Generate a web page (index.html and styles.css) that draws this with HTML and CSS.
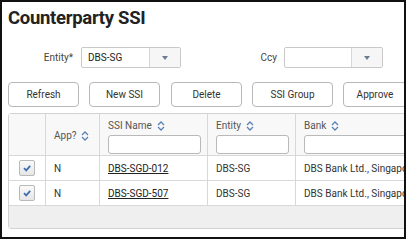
FILE: index.html
```html
<!DOCTYPE html>
<html>
<head>
<meta charset="utf-8">
<link rel="stylesheet" href="styles.css">
</head>
<body>
<div class="frame">
  <h1 class="title">Counterparty SSI</h1>
  <div class="filters">
    <label class="lbl lbl-entity">Entity*</label>
    <div class="select sel-entity"><span class="val">DBS-SG</span><span class="drop"><i class="tri"></i></span></div>
    <label class="lbl lbl-ccy">Ccy</label>
    <div class="select sel-ccy"><span class="val"></span><span class="drop"><i class="tri"></i></span></div>
  </div>
  <div class="buttons">
    <button class="btn b1">Refresh</button>
    <button class="btn b2">New SSI</button>
    <button class="btn b3">Delete</button>
    <button class="btn b4">SSI Group</button>
    <button class="btn b5">Approve</button>
  </div>
  <div class="grid">
    <div class="row head">
      <div class="cell c0"></div>
      <div class="cell c1"><span class="hd">App? <svg class="sort" viewBox="0 0 8 10"><path d="M1 4 L4 1 L7 4 M1 6 L4 9 L7 6" fill="none" stroke="#5b7fb8" stroke-width="1.3"/></svg></span></div>
      <div class="cell c2 top"><span class="hd">SSI Name <svg class="sort" viewBox="0 0 8 10"><path d="M1 4 L4 1 L7 4 M1 6 L4 9 L7 6" fill="none" stroke="#5b7fb8" stroke-width="1.3"/></svg></span><span class="inp"></span></div>
      <div class="cell c3 top"><span class="hd">Entity <svg class="sort" viewBox="0 0 8 10"><path d="M1 4 L4 1 L7 4 M1 6 L4 9 L7 6" fill="none" stroke="#5b7fb8" stroke-width="1.3"/></svg></span><span class="inp"></span></div>
      <div class="cell c4 top"><span class="hd">Bank <svg class="sort" viewBox="0 0 8 10"><path d="M1 4 L4 1 L7 4 M1 6 L4 9 L7 6" fill="none" stroke="#5b7fb8" stroke-width="1.3"/></svg></span><span class="inp"></span></div>
    </div>
    <div class="row data">
      <div class="cell c0"><span class="chk"><svg viewBox="0 0 10 10"><path d="M2 5.2 L4.2 7.4 L8.2 2.8" fill="none" stroke="#3f6fb0" stroke-width="1.8"/></svg></span></div>
      <div class="cell c1">N</div>
      <div class="cell c2"><a class="lnk">DBS-SGD-012</a></div>
      <div class="cell c3">DBS-SG</div>
      <div class="cell c4">DBS Bank Ltd., Singapore</div>
    </div>
    <div class="row data">
      <div class="cell c0"><span class="chk"><svg viewBox="0 0 10 10"><path d="M2 5.2 L4.2 7.4 L8.2 2.8" fill="none" stroke="#3f6fb0" stroke-width="1.8"/></svg></span></div>
      <div class="cell c1">N</div>
      <div class="cell c2"><a class="lnk">DBS-SGD-507</a></div>
      <div class="cell c3">DBS-SG</div>
      <div class="cell c4">DBS Bank Ltd., Singapore</div>
    </div>
    <div class="foot"></div>
  </div>
</div>
</body>
</html>
```
FILE: styles.css
```css
* { box-sizing: border-box; }
html, body { margin: 0; padding: 0; background: #fff; }
body { font-family: Roboto, "Liberation Sans", sans-serif; font-size: 10px; color: #333; width: 409px; height: 242px; overflow: hidden; }
.frame {
  width: 406px; height: 239px;
  border: 2px solid #111;
  padding: 0 0 0 6px;
  overflow: hidden;
  position: relative;
}
.title { margin: 5px 0 0 0; font-size: 18.5px; font-weight: 700; color: #222; letter-spacing: -0.3px; line-height: 22px; }
.filters { display: flex; align-items: center; margin-top: 18px; height: 21px; }
.lbl { color: #444; font-size: 10px; text-align: right; }
.lbl-entity { width: 65px; margin-right: 8px; }
.lbl-ccy { width: 96px; margin-right: 7px; }
.select { display: flex; height: 21px; border: 1px solid #c9c9c9; border-radius: 2px; background: #fff; }
.sel-entity { width: 100px; }
.sel-ccy { width: 99px; }
.select .val { flex: 1; padding-left: 6px; line-height: 19px; color: #222; }
.select .drop { width: 31px; border-left: 1px solid #d6d6d6; background: #f6f6f6; display: flex; align-items: center; justify-content: center; }
.tri { width: 0; height: 0; border-left: 3.5px solid transparent; border-right: 3.5px solid transparent; border-top: 4px solid #6b7c8f; margin-top: 1px; }
.buttons { display: flex; gap: 10px; margin-top: 14px; height: 25px; }
.btn { font-family: inherit; font-size: 10px; color: #333; background: #fff; border: 1px solid #b8b8b8; border-radius: 4px; height: 25px; padding: 0; flex: none; }
.b1 { width: 71px; }
.b2 { width: 71px; }
.b3 { width: 71px; margin-left: 1px; }
.b4 { width: 81px; }
.b5 { width: 64px; }
.grid { margin-top: 6px; border: 1px solid #d2d2d2; border-radius: 3px; width: 410px; background: #fff; }
.row { display: flex; }
.row.head { height: 42px; background: #f8f8f8; border-bottom: 1px solid #d8d8d8; }
.row.data { height: 25px; border-bottom: 1px solid #d8d8d8; background: #fff; }
.cell { border-right: 1px solid #d8d8d8; padding-left: 8px; display: flex; align-items: center; flex: none; color: #333; }
.c0 { width: 37px; justify-content: center; padding-left: 0; }
.c1 { width: 54px; }
.c2 { width: 108px; }
.c3 { width: 88px; }
.c4 { width: 120px; border-right: none; white-space: nowrap; overflow: hidden; }
.row.head .cell { color: #555; }
.row.head .c1 { padding-top: 2px; }
.top { flex-direction: column; align-items: flex-start; justify-content: flex-start; padding-top: 5px; }
.hd { display: inline-flex; align-items: center; line-height: 13px; }
.sort { width: 8px; height: 10px; margin-left: 5px; }
.inp { display: block; width: calc(100% - 6px); height: 19px; border: 1px solid #b9b9b9; border-radius: 3px; background: #fff; margin-top: 3px; }
.chk { width: 16px; height: 16px; border: 1px solid #b9b9b9; border-radius: 2px; background: linear-gradient(#fafafa, #e6e6e6); display: flex; align-items: center; justify-content: center; }
.chk svg { width: 10px; height: 10px; }
.lnk { color: #222; text-decoration: underline; }
.foot { height: 22px; background: #efefef; }
```
